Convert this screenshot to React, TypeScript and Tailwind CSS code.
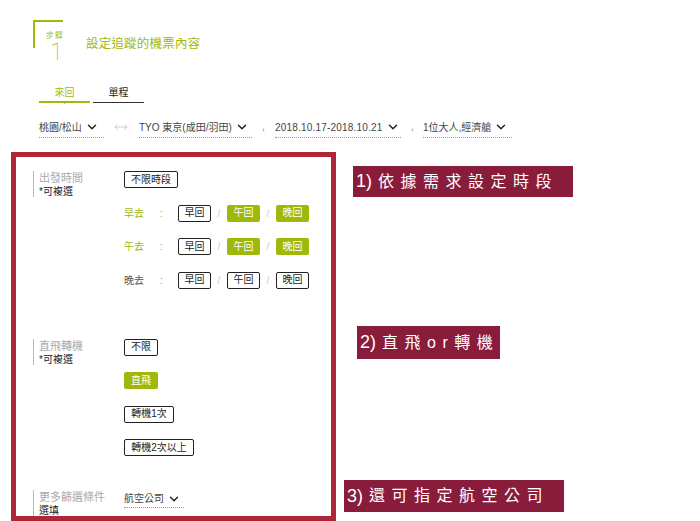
import { ChevronDown, MoveHorizontal } from 'lucide-react'

const green = 'text-[#a0b90c]'

const Chip = ({ label, on, className = '' }: { label: string; on?: boolean; className?: string }) => (
  <span
    className={`flex h-[17px] items-center justify-center whitespace-nowrap rounded-[2px] text-[10px] leading-none ${
      on ? 'bg-[#a0b80a] text-white' : 'border border-[#222] bg-white text-[#222]'
    } ${className}`}
  >
    {label}
  </span>
)

const Select = ({ label, className = '' }: { label: string; className?: string }) => (
  <div className={`flex items-center gap-[3px] whitespace-nowrap border-b border-dotted border-[#999] text-[10px] text-[#444] ${className}`}>
    <span>{label}</span>
    <ChevronDown size={14} strokeWidth={2.5} className="shrink-0 text-[#222]" />
  </div>
)

const Label = ({ title, note }: { title: string; note: string }) => (
  <div className="h-[26px] w-[91px] shrink-0 border-l border-[#bbb] pl-[5px] text-[11px] leading-[14px]">
    <div className="whitespace-nowrap text-[#aaa]">{title}</div>
    <div className="text-[10px] text-[#222]">{note}</div>
  </div>
)

const TimeRow = ({ label, color, lit }: { label: string; color: string; lit: boolean }) => (
  <div className="flex items-center text-[10px]">
    <span className={`w-[36px] ${color}`}>{label}</span>
    <span className={`w-[18px] ${lit ? green : 'text-[#999]'}`}>:</span>
    <Chip label="早回" className="w-[33px]" />
    <span className="w-[16px] text-center text-[#ccc]">/</span>
    <Chip label="午回" on={lit} className="w-[33px]" />
    <span className="w-[16px] text-center text-[#ccc]">/</span>
    <Chip label="晚回" on={lit} className="w-[33px]" />
  </div>
)

const Note = ({ lead, text, className }: { lead: string; text: string; className: string }) => (
  <div className={`absolute flex items-center whitespace-nowrap bg-[#8a1c3b] pl-[3px] text-white ${className}`}>
    <span className="mr-[6px] text-[18px]">{lead}</span>
    <span className="text-[16px] tracking-[6.5px]">{text}</span>
  </div>
)

export default function App() {
  return (
    <div className="relative h-[521px] w-[700px] overflow-hidden bg-white pl-[33px] pt-[20px] font-['Liberation_Sans','Noto_Sans_CJK_TC',sans-serif]">
      <div className="flex h-[40px] items-start">
        <div className="relative h-[28px] w-[30px] border-l-2 border-t-2 border-[#a0b90c]">
          <span className={`absolute left-[11px] top-[9px] whitespace-nowrap text-[8px] leading-[10px] tracking-[1px] ${green}`}>步驟</span>
          <span className={`absolute left-[15px] top-[21px] font-['Roboto'] text-[24px] font-thin leading-[18px] ${green}`}>1</span>
        </div>
        <h1 className={`ml-[23px] mt-[15px] text-[12.5px] leading-[18px] tracking-[0.2px] ${green}`}>設定追蹤的機票內容</h1>
      </div>

      <div className="ml-[6px] mt-[25px] flex gap-[3px] text-[10px]">
        <div className={`relative h-[18px] w-[51px] border-b-2 border-[#a0b90c] text-center leading-[16px] ${green}`}>
          來回
          <span className="absolute left-[23px] top-[16px] h-0 w-0 border-x-[3px] border-t-[3px] border-x-transparent border-t-[#a0b90c]" />
        </div>
        <div className="h-[18px] w-[51px] border-b border-[#333] text-center leading-[16px] text-[#222]">單程</div>
      </div>

      <div className="ml-[6px] mt-[14px] flex items-start text-[10px]">
        <Select label="桃園/松山" className="h-[21px] w-[65px]" />
        <span className="flex h-[20px] w-[35px] items-center pl-[10px] text-[#bbb]">
          <MoveHorizontal size={14} strokeWidth={1.25} />
        </span>
        <Select label="TYO 東京(成田/羽田)" className="h-[21px] w-[113px]" />
        <span className="w-[23px] pl-[10px] leading-[20px] text-[#888]">,</span>
        <Select label="2018.10.17-2018.10.21" className="h-[21px] w-[126px] tracking-[0.2px]" />
        <span className="w-[22px] pl-[10px] leading-[20px] text-[#888]">,</span>
        <Select label="1位大人,經濟艙" className="h-[21px] w-[89px]" />
      </div>

      <div className="mt-[33px] flex">
        <Label title="出發時間" note="*可複選" />
        <div className="flex flex-col items-start gap-[16.67px]">
          <Chip label="不限時段" className="w-[54px]" />
          <TimeRow label="早去" color={green} lit />
          <TimeRow label="午去" color={green} lit />
          <TimeRow label="晚去" color="text-[#555]" lit={false} />
        </div>
      </div>

      <div className="mt-[50px] flex">
        <Label title="直飛轉機" note="*可複選" />
        <div className="flex flex-col items-start gap-[16.5px]">
          <Chip label="不限" className="w-[34px]" />
          <Chip label="直飛" on className="w-[34px]" />
          <Chip label="轉機1次" className="w-[50px]" />
          <Chip label="轉機2次以上" className="w-[70px]" />
        </div>
      </div>

      <div className="mt-[34px] flex">
        <Label title="更多篩選條件" note="選填" />
        <Select label="航空公司" className="h-[18px] w-[60px]" />
      </div>

      <div className="absolute left-[11px] top-[152px] h-[369px] w-[325px] border-[5px] border-[#ae2638]" />
      <Note lead="1)" text="依據需求設定時段" className="left-[353px] top-[166px] h-[31px] w-[220px]" />
      <Note lead="2)" text="直飛or轉機" className="left-[357px] top-[326px] h-[33px] w-[143px]" />
      <Note lead="3)" text="還可指定航空公司" className="left-[344px] top-[480px] h-[32px] w-[220px]" />
    </div>
  )
}
